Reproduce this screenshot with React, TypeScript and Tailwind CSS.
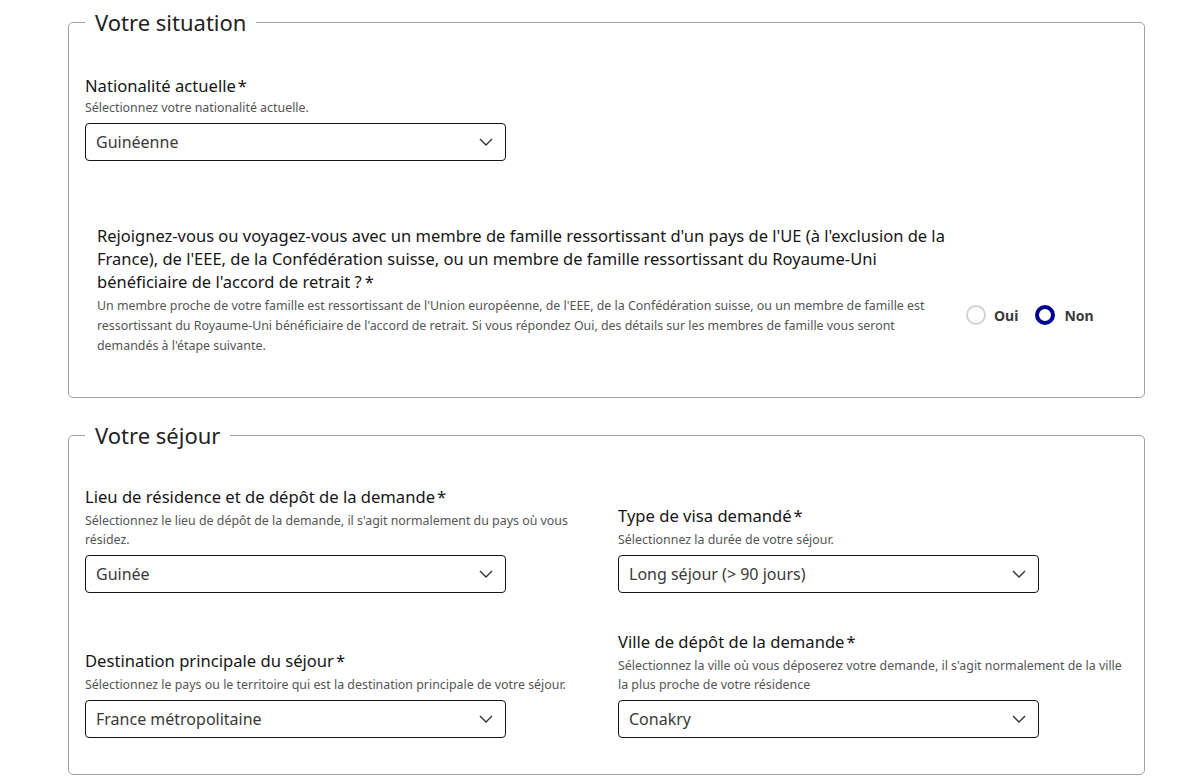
import React from "react";

const Chevron = () => (
  <svg width="16" height="16" viewBox="0 0 16 16" fill="none" className="shrink-0">
    <path d="M2 5l6 6 6-6" stroke="#333" strokeWidth="1.4" />
  </svg>
);

function Select({ value }: { value: string }) {
  return (
    <div className="flex h-[38px] w-[421px] items-center justify-between rounded-[4px] border border-[#161616] bg-white pl-[10px] pr-[11px] text-[16px] text-[#3a3a3a]">
      <span>{value}</span>
      <Chevron />
    </div>
  );
}

function Field({ label, help, value, wide }: { label: string; help: React.ReactNode; value: string; wide?: boolean }) {
  return (
    <div className="flex flex-col">
      <div className="text-[16.6px] leading-[22px] text-[#161616]">
        {label}
        <span className="ml-[2px]">*</span>
      </div>
      <div className={wide ? "mt-[3px] mb-[6px] text-[12.4px] leading-[19px] text-[#555]" : "mt-[1px] mb-[6px] text-[12.4px] leading-[19px] text-[#555]"}>{help}</div>
      <Select value={value} />
    </div>
  );
}

export default function App() {
  return (
    <div className="min-h-[782px] w-[1192px] bg-white pt-[9px] font-['Noto_Sans',sans-serif]">
      <fieldset className="ml-[68px] w-[1077px] rounded-[5px] border border-[#a0a0a0] pl-[16px] pr-[16px] pb-[41px]">
        <legend className="px-[10px] text-[22px] leading-[26px] text-[#222]">Votre situation</legend>
        <div className="mt-[40px]">
          <Field label="Nationalité actuelle" help="Sélectionnez votre nationalité actuelle." value="Guinéenne" />
        </div>
        <div className="mt-[63px] flex items-center pl-[12px]">
          <div className="w-[852px] shrink-0">
            <div className="text-[16.5px] leading-[23px] text-[#161616]">
              Rejoignez-vous ou voyagez-vous avec un membre de famille ressortissant d'un pays de l'UE (à l'exclusion de la France), de l'EEE, de la Confédération suisse, ou un membre de famille ressortissant du Royaume-Uni bénéficiaire de l'accord de retrait ?<span className="ml-[3px]">*</span>
            </div>
            <div className="mt-[3px] text-[12.4px] leading-[20px] text-[#555]">
              Un membre proche de votre famille est ressortissant de l'Union européenne, de l'EEE, de la Confédération suisse, ou un membre de famille est ressortissant du Royaume-Uni bénéficiaire de l'accord de retrait. Si vous répondez Oui, des détails sur les membres de famille vous seront demandés à l'étape suivante.
            </div>
          </div>
          <div className="ml-[17px] mt-[50px] flex items-center">
            <span className="h-[20px] w-[20px] rounded-full border-[2px] border-[#d0d3d8]" />
            <span className="ml-[8px] text-[14px] font-bold text-[#3a3a3a]">Oui</span>
            <span className="ml-[17px] h-[20px] w-[20px] rounded-full border-[4px] border-[#000091]" />
            <span className="ml-[9px] text-[14px] font-bold text-[#3a3a3a]">Non</span>
          </div>
        </div>
      </fieldset>

      <fieldset className="ml-[68px] mt-[24px] w-[1077px] rounded-[5px] border border-[#a0a0a0] pl-[16px] pr-[16px] pb-[36px]">
        <legend className="px-[10px] text-[22px] leading-[26px] text-[#222]">Votre séjour</legend>
        <div className="mt-[38px] grid grid-cols-[533px_1fr] items-end gap-y-[38px]">
          <Field
            wide
            label="Lieu de résidence et de dépôt de la demande"
            help={<>Sélectionnez le lieu de dépôt de la demande, il s'agit normalement du pays où vous<br />résidez.</>}
            value="Guinée"
          />
          <Field wide label="Type de visa demandé" help="Sélectionnez la durée de votre séjour." value="Long séjour (> 90 jours)" />
          <Field
            wide
            label="Destination principale du séjour"
            help="Sélectionnez le pays ou le territoire qui est la destination principale de votre séjour."
            value="France métropolitaine"
          />
          <Field
            wide
            label="Ville de dépôt de la demande"
            help={<>Sélectionnez la ville où vous déposerez votre demande, il s'agit normalement de la ville<br />la plus proche de votre résidence</>}
            value="Conakry"
          />
        </div>
      </fieldset>
    </div>
  );
}
